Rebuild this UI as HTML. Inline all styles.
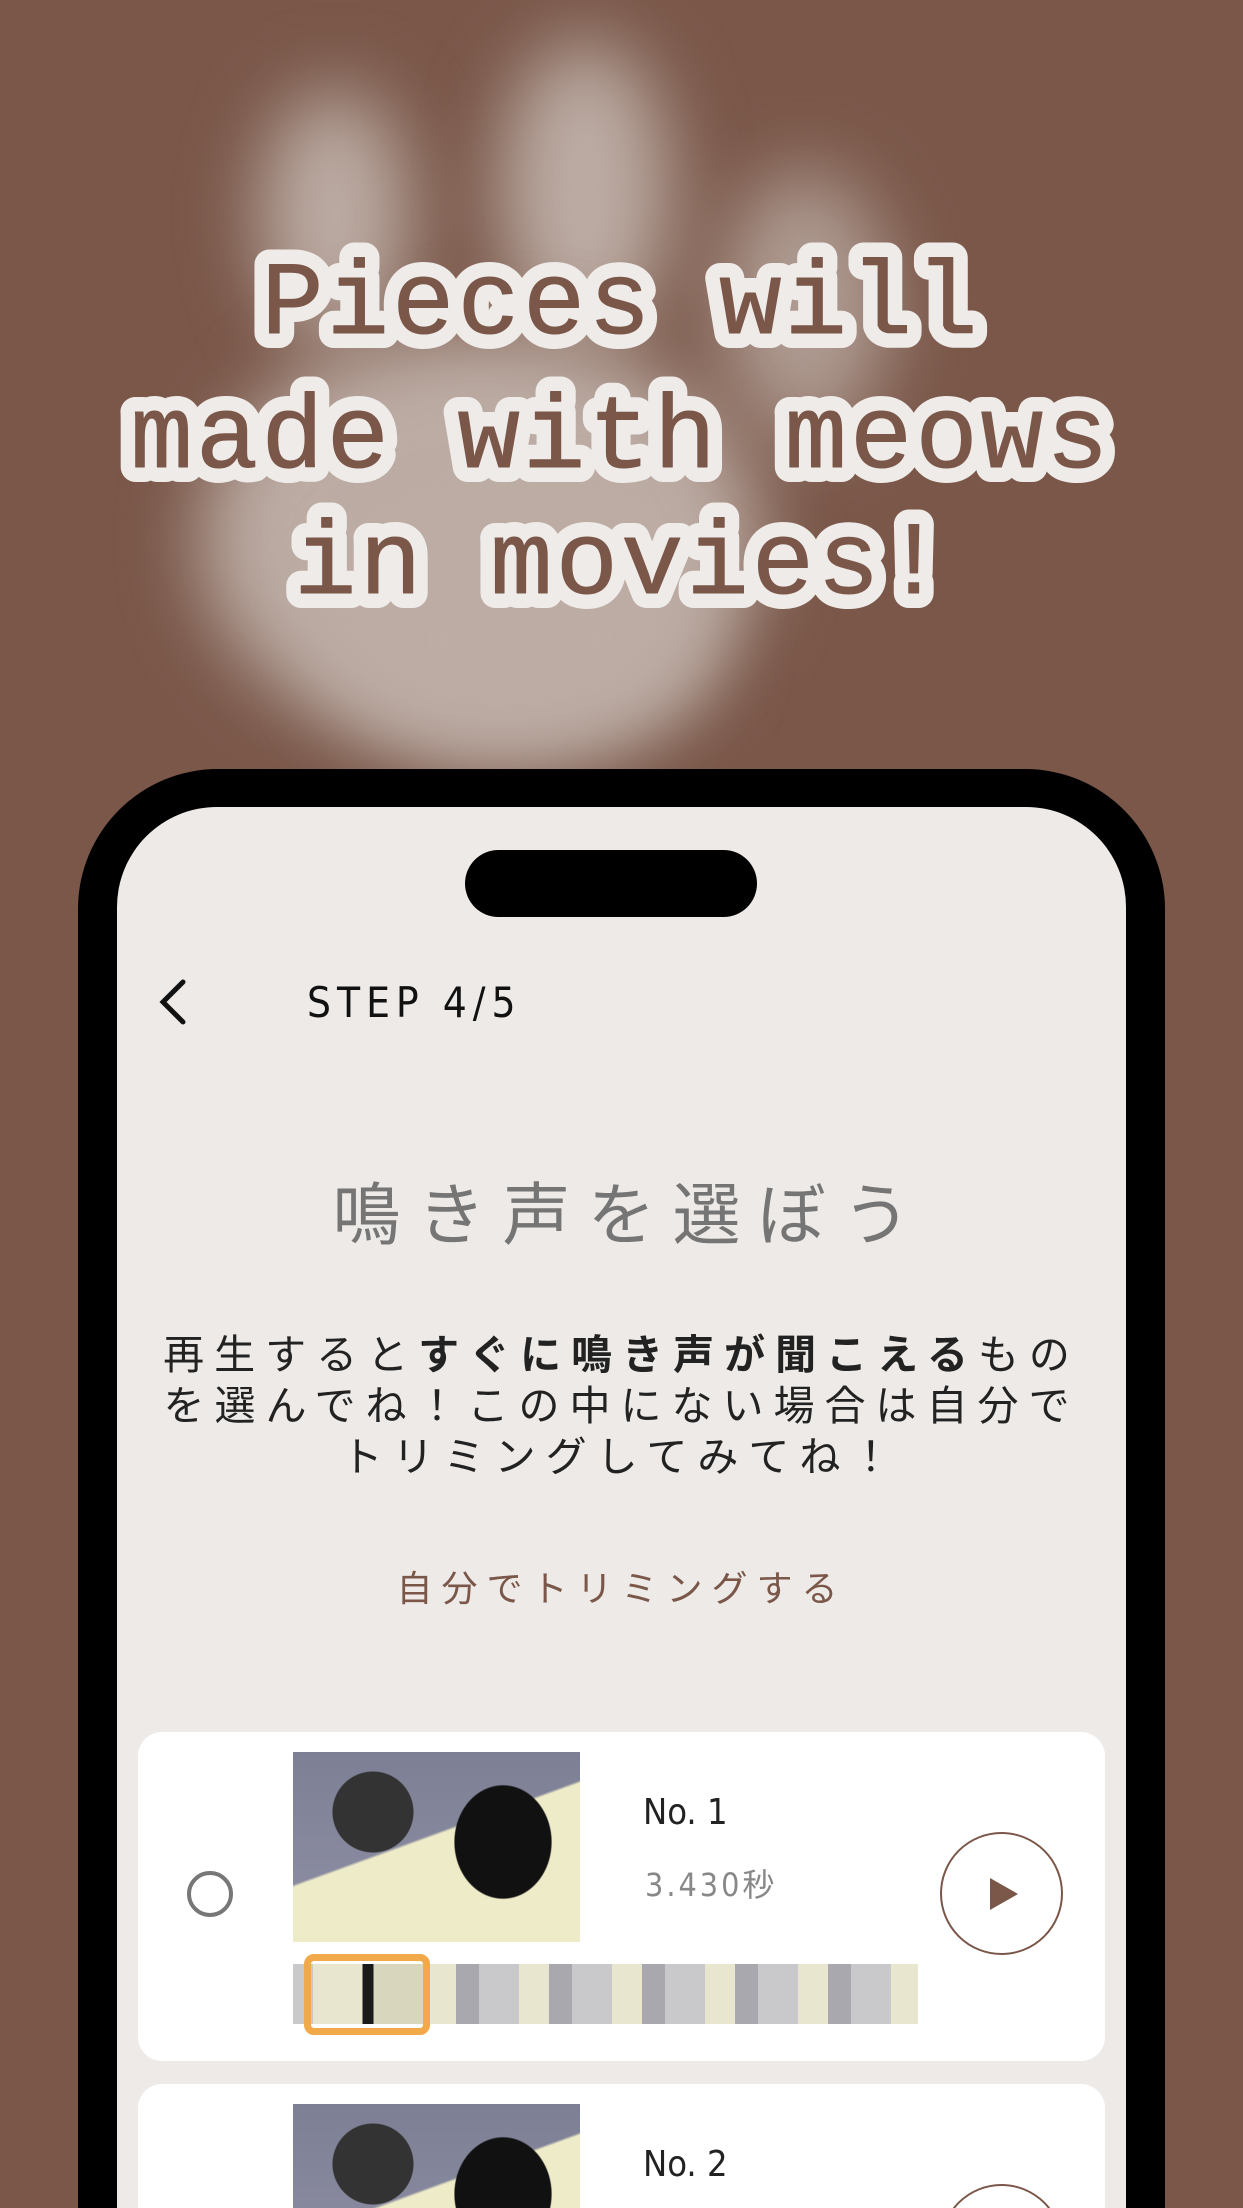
<!DOCTYPE html>
<html style="width:1243px;height:2208px;overflow:hidden"><head><meta charset="utf-8"><style>
*{margin:0;padding:0;box-sizing:border-box}
body{width:1243px;height:2208px;overflow:hidden;background:#7a5749;font-family:"Liberation Sans","Noto Sans CJK JP",sans-serif}
#wrap{position:relative;width:1243px;height:2208px;overflow:hidden}
.blob{position:absolute;background:#bcaca4;border-radius:50%;filter:blur(38px)}
.phone{position:absolute;left:78px;top:769px;width:1087px;height:1439px;background:#000;border-radius:140px 140px 0 0}
.screen{position:absolute;left:117px;top:807px;width:1009px;height:1401px;background:#edeae7;border-radius:100px 100px 0 0}
.notch{position:absolute;left:465px;top:850px;width:292px;height:67px;background:#000;border-radius:34px}
.abs{position:absolute}
.card{position:absolute;left:138px;width:967px;height:329px;background:#fff;border-radius:24px}
.thumb{position:absolute;width:287px;height:190px;background:
 radial-gradient(ellipse 60px 70px at 210px 90px,#111 80%,transparent 82%),
 radial-gradient(ellipse 50px 50px at 80px 60px,#333 80%,transparent 82%),
 linear-gradient(160deg,transparent 45%,#eeebc8 46%),
 linear-gradient(#7d7f95,#8f90a5)}
</style></head><body><div id="wrap">
<div class="blob" style="left:260px;top:90px;width:150px;height:250px"></div>
<div class="blob" style="left:500px;top:40px;width:170px;height:300px"></div>
<div class="blob" style="left:720px;top:170px;width:170px;height:270px;opacity:.8"></div>
<div class="blob" style="left:200px;top:330px;width:560px;height:420px"></div>
<div class="blob" style="left:330px;top:520px;width:380px;height:240px"></div>

<svg class="abs" style="left:0;top:0" width="1243" height="700">
<g font-family="Liberation Mono, DejaVu Sans Mono, monospace" font-size="104" text-anchor="middle" letter-spacing="3" stroke-linejoin="round">
<g stroke="#efebe8" stroke-width="30" fill="#efebe8">
<text x="621" y="333">Pieces will</text>
<text x="621" y="467">made with meows</text>
<text x="621" y="593">in movies!</text>
</g>
<g fill="#7a5749" stroke="#7a5749" stroke-width="1">
<text x="621" y="333">Pieces will</text>
<text x="621" y="467">made with meows</text>
<text x="621" y="593">in movies!</text>
</g>
</g>
</svg>

<div class="phone"></div>
<div class="screen"></div>
<div class="notch"></div>

<svg class="abs" style="left:155px;top:978px" width="36" height="48"><path d="M28 4 L8 24 L28 44" fill="none" stroke="#111" stroke-width="5" stroke-linecap="round"/></svg>
<div class="abs" style="left:307px;top:978px;font-size:42px;color:#111;letter-spacing:6px;font-family:'DejaVu Sans Condensed','Liberation Sans Narrow',sans-serif">STEP 4/5</div>

<div class="abs" style="left:0;width:1243px;top:1160px;text-align:center;font-family:'Noto Sans CJK JP',sans-serif;font-weight:400;font-size:68px;color:#757575;letter-spacing:17px;padding-left:17px">鳴き声を選ぼう</div>

<div class="abs" style="left:100px;width:1043px;top:1326px;text-align:center;white-space:nowrap;font-family:'Noto Sans CJK JP',sans-serif;font-size:41px;line-height:51px;color:#222;letter-spacing:10px;font-weight:400">再生すると<b style="font-weight:700">すぐに鳴き声が聞こえる</b>もの<br>を選んでね！この中にない場合は自分で<br>トリミングしてみてね！</div>

<div class="abs" style="left:0;width:1243px;top:1560px;text-align:center;font-family:'Noto Sans CJK JP',sans-serif;font-size:36px;color:#7a5749;letter-spacing:9px;font-weight:400">自分でトリミングする</div>

<div class="card" style="top:1732px"></div>
<div class="abs" style="left:187px;top:1871px;width:46px;height:46px;border:4px solid #777;border-radius:50%"></div>
<div class="thumb" style="left:293px;top:1752px"></div>
<div class="abs" style="left:293px;top:1964px;width:625px;height:60px;background:repeating-linear-gradient(90deg,#c9c9cc 0 40px,#e8e6cf 40px 70px,#a8a8ae 70px 93px)"></div>
<div class="abs" style="left:313px;top:1964px;width:110px;height:60px;background:linear-gradient(90deg,#e8e6cf 0 45%,#1a1a1a 45% 55%,#d8d6bc 55%)"></div>
<div class="abs" style="left:304px;top:1954px;width:126px;height:81px;border:7px solid #f2a94a;border-radius:10px"></div>
<div class="abs" style="left:643px;top:1792px;font-size:36px;color:#222;font-family:'DejaVu Sans Condensed',sans-serif">No. 1</div>
<div class="abs" style="left:645px;top:1860px;font-size:32px;color:#888;letter-spacing:3px;font-family:'DejaVu Sans Condensed','Noto Sans CJK JP',sans-serif">3.430秒</div>
<div class="abs" style="left:940px;top:1832px;width:123px;height:123px;border:2px solid #7a5749;border-radius:50%"></div>
<svg class="abs" style="left:988px;top:1876px" width="32" height="36"><path d="M2 2 L30 18 L2 34Z" fill="#7a5749"/></svg>

<div class="abs" style="left:138px;top:2084px;width:967px;height:124px;background:#fff;border-radius:24px 24px 0 0;overflow:hidden">
<div class="thumb" style="left:155px;top:20px"></div>
<div class="abs" style="left:505px;top:60px;font-size:36px;color:#222;font-family:'DejaVu Sans Condensed',sans-serif">No. 2</div>
<div class="abs" style="left:802px;top:100px;width:123px;height:123px;border:2px solid #7a5749;border-radius:50%"></div>
</div>
</div></body></html>
